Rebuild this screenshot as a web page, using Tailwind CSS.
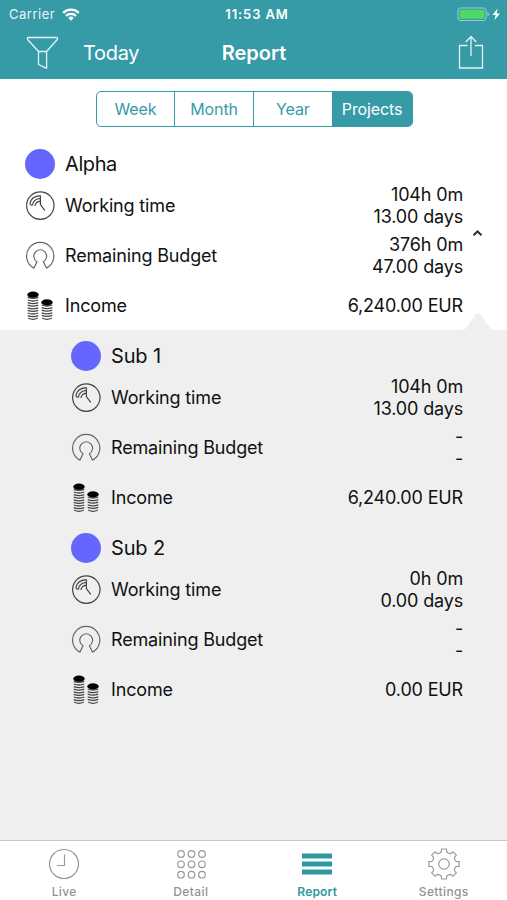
<!DOCTYPE html>
<html lang="en">
<head>
<meta charset="utf-8">
<title>Report</title>
<script src="https://cdn.jsdelivr.net/npm/@tailwindcss/browser@4"></script>
</head>
<body class="bg-white">
<svg class="hidden">
  <symbol id="time" viewBox="0 0 30 30">
    <g fill="none" stroke="#444" stroke-width="1.200">
      <circle cx="15.300" cy="14.600" r="13.700"/>
      <path d="M19.800 19.300L15.400 13.600V4.600M4.800 13.200C5.500 8 9.400 4.900 15.400 4.600M7.300 14.500C7.900 10.500 10.600 7.700 15.400 7.400M9.900 15C10.400 12.300 12 10.500 15.400 10.200M4.800 13.200L7.300 14.500"/>
    </g>
  </symbol>
  <symbol id="budget" viewBox="0 0 30 30">
    <path fill="none" stroke="#666" stroke-width="1.200" stroke-linejoin="round" d="M9 27.100A13.600 13.600 0 1 1 21.400 27.100L18.400 20.700A6.400 6.400 0 1 0 12 20.700Z"/>
  </symbol>
  <symbol id="coins" viewBox="0 0 30 30">
    <g fill="none" stroke="#444" stroke-width="1.300">
      <path d="M2.700 6.400q5.300 2 10.600 0M2.700 9q5.300 2 10.600 0M2.700 11.600q5.300 2 10.600 0M2.700 14.200q5.300 2 10.600 0M2.700 16.800q5.300 2 10.600 0M2.700 19.400q5.300 2 10.600 0M2.700 22q5.300 2 10.600 0M2.700 24.600q5.300 2 10.600 0M3.200 27q4.800 2.600 9.600 0"/>
      <path d="M16.700 14q5.300 2 10.600 0M16.700 16.600q5.300 2 10.600 0M16.700 19.200q5.300 2 10.600 0M16.700 21.800q5.300 2 10.600 0M16.700 24.400q5.300 2 10.600 0M17.200 27q4.800 2.600 9.600 0"/>
    </g>
    <ellipse cx="8" cy="3.700" rx="5.700" ry="3.100"/>
    <ellipse cx="22" cy="11.400" rx="5.700" ry="3.100"/>
  </symbol>
  <symbol id="tooth" viewBox="-16 -16 32 32" overflow="visible">
    <path d="M-4.600-11.100Q-3-10.800-2.700-12.300L-2.400-15H2.400L2.700-12.300Q3-10.800 4.600-11.100"/>
  </symbol>
</svg>
<div class="w-[507px] h-[900px] flex flex-col overflow-hidden font-['Inter',sans-serif] text-[#111]">
  <header class="h-[79px] shrink-0 bg-[#369ba7] text-white">
    <div class="h-[27px] grid grid-cols-3 items-center px-[9px] text-[13px] leading-[27px]">
      <div class="flex items-center gap-[7px] pt-px">
        <span class="tracking-[0.5px] text-white/90">Carrier</span>
        <svg class="w-[18px] h-[13px]" viewBox="0 0 18 13" fill="none" stroke="#fff" stroke-width="2.300"><path d="M1.200 4.800a11.200 11.200 0 0 1 15.600 0M4 7.900a7.200 7.200 0 0 1 10 0"/><path d="M6.300 9.900a3.900 3.900 0 0 1 5.400 0L9 12.800z" fill="#fff" stroke="none"/></svg>
      </div>
      <span class="text-center font-semibold pl-[7px] pt-px tracking-[0.9px] whitespace-nowrap">11:53 AM</span>
      <svg class="w-[44px] h-[15px] justify-self-end -mr-[3px]" viewBox="0 0 44 15"><rect x="1" y="1" width="28" height="12.500" rx="2.500" fill="none" stroke="#9bcdd3"/><rect x="2.700" y="2.700" width="24.600" height="9.100" rx="1" fill="#4cd964"/><path d="M30.500 5v4.500q1.500-.7 1.500-2.200T30.500 5z" fill="#9bcdd3"/><path d="M40.500 1.500L35.500 8h3.200l-1.300 5.200L43 6.500h-3.300z" fill="#fff"/></svg>
    </div>
    <div class="h-[52px] grid grid-cols-3 items-center pl-[26px] pr-[22px]">
      <div class="flex items-center gap-[24px]">
        <svg class="w-[33px] h-[34px]" viewBox="0 0 33 34" fill="none" stroke="#e3f4f5" stroke-width="1.300" stroke-linejoin="round"><path d="M2 1.500H31Q32.200 2.200 31 3.800L20.600 15.500V32.300L12.500 28.500V15.500L1.800 3.800Q.8 2.200 2 1.500zM12.500 15.500h8.100"/></svg>
        <span class="text-[20px] tracking-[-0.3px]">Today</span>
      </div>
      <span class="text-center text-[20px] font-semibold -ml-[3px]">Report</span>
      <svg class="w-[28px] h-[36px] justify-self-end" viewBox="0 0 28 36" fill="none" stroke="#e3f4f5" stroke-width="1.300"><path d="M10.500 10.500H2.500V33h23V10.500h-7.500M14 21V1.500M8.800 7l5.200-5.500L19.200 7"/></svg>
    </div>
  </header>
  <main class="flex-1 flex flex-col">
    <div class="h-[60px] pt-[12px] pl-px flex justify-center">
      <div class="h-[36px] w-[317px] grid grid-cols-4 border border-[#369ba7] rounded-[5px] overflow-hidden divide-x divide-[#369ba7] text-[16px] leading-[35px] text-center tracking-[-0.1px] text-[#369ba7]">
        <span>Week</span><span>Month</span><span>Year</span><span class="bg-[#369ba7] text-white">Projects</span>
      </div>
    </div>
    <section class="relative h-[191px] pl-[25px] pr-[44px] pt-[8px] text-[18px] leading-[22px] tracking-[-0.16px]">
      <div class="h-[34px] flex items-center gap-[10px]"><i class="size-[30px] rounded-full bg-[#6666ff]"></i><span class="text-[20px] tracking-[-0.4px]">Alpha</span></div>
      <div class="h-[50px] flex items-center gap-[10px]"><svg class="size-[30px]"><use href="#time"/></svg><span class="flex-1">Working time</span><span class="text-right">104h 0m<br>13.00 days</span></div>
      <div class="h-[50px] flex items-center gap-[10px]"><svg class="size-[30px]"><use href="#budget"/></svg><span class="flex-1">Remaining Budget</span><span class="text-right">376h 0m<br>47.00 days</span></div>
      <div class="h-[50px] flex items-center gap-[10px]"><svg class="size-[30px]"><use href="#coins"/></svg><span class="flex-1">Income</span><span class="text-right">6,240.00 EUR</span></div>
      <svg class="absolute left-[472px] top-[90px] w-[11px] h-[8px]" viewBox="0 0 11 8" fill="none" stroke="#26333d" stroke-width="2"><path d="M1.500 6.300L5.500 2.500L9.500 6.300"/></svg>
      <svg class="absolute left-[463px] bottom-0 w-[30px] h-[18px]" viewBox="0 0 30 18"><path d="M0 18Q2 17.500 3 16L13 2Q15 0 17 2L27 16Q28 17.500 30 18z" fill="#efefef"/></svg>
    </section>
    <div class="flex-1 bg-[#efefef] pt-px pl-[71px] pr-[44px] text-[18px] leading-[22px] tracking-[-0.16px]">
      <section class="h-[192px] pt-[8px]">
        <div class="h-[34px] flex items-center gap-[10px]"><i class="size-[30px] rounded-full bg-[#6666ff]"></i><span class="text-[20px]">Sub 1</span></div>
        <div class="h-[50px] flex items-center gap-[10px]"><svg class="size-[30px]"><use href="#time"/></svg><span class="flex-1">Working time</span><span class="text-right">104h 0m<br>13.00 days</span></div>
        <div class="h-[50px] flex items-center gap-[10px]"><svg class="size-[30px]"><use href="#budget"/></svg><span class="flex-1">Remaining Budget</span><span class="text-right">-<br>-</span></div>
        <div class="h-[50px] flex items-center gap-[10px]"><svg class="size-[30px]"><use href="#coins"/></svg><span class="flex-1">Income</span><span class="text-right">6,240.00 EUR</span></div>
      </section>
      <section class="h-[192px] pt-[8px]">
        <div class="h-[34px] flex items-center gap-[10px]"><i class="size-[30px] rounded-full bg-[#6666ff]"></i><span class="text-[20px]">Sub 2</span></div>
        <div class="h-[50px] flex items-center gap-[10px]"><svg class="size-[30px]"><use href="#time"/></svg><span class="flex-1">Working time</span><span class="text-right">0h 0m<br>0.00 days</span></div>
        <div class="h-[50px] flex items-center gap-[10px]"><svg class="size-[30px]"><use href="#budget"/></svg><span class="flex-1">Remaining Budget</span><span class="text-right">-<br>-</span></div>
        <div class="h-[50px] flex items-center gap-[10px]"><svg class="size-[30px]"><use href="#coins"/></svg><span class="flex-1">Income</span><span class="text-right">0.00 EUR</span></div>
      </section>
    </div>
  </main>
  <nav class="h-[60px] shrink-0 border-t border-[#c9c9c9] bg-white grid grid-cols-4 pl-px text-[12px] leading-[16px] font-medium tracking-[0.4px] text-[#929292]">
    <a class="flex flex-col items-center pt-[7px] gap-[4px]"><svg class="size-[32px]" viewBox="0 0 32 32" fill="none" stroke="#999" stroke-width="1.200"><circle cx="16" cy="16" r="14.500"/><path d="M16.500 6.500v11H9"/></svg>Live</a>
    <a class="flex flex-col items-center pt-[7px] gap-[4px]"><svg class="size-[32px]" viewBox="0 0 32 32" fill="none" stroke="#999" stroke-width="1.200"><circle cx="6" cy="6" r="3.300"/><circle cx="16.500" cy="6" r="3.300"/><circle cx="27" cy="6" r="3.300"/><circle cx="6" cy="16.300" r="3.300"/><circle cx="16.500" cy="16.300" r="3.300"/><circle cx="27" cy="16.300" r="3.300"/><circle cx="6" cy="26.700" r="3.300"/><circle cx="16.500" cy="26.700" r="3.300"/><circle cx="27" cy="26.700" r="3.300"/></svg>Detail</a>
    <a class="flex flex-col items-center pt-[7px] gap-[4px] text-[#2f97a0] font-semibold tracking-[0.2px]"><svg class="size-[32px]" viewBox="0 0 32 32" fill="#2f97a0"><path d="M1 5.500h30v5h-30zM1 13.500h30v5h-30zM1 21.500h30v5h-30z"/></svg>Report</a>
    <a class="flex flex-col items-center pt-[7px] gap-[4px]"><svg class="size-[32px]" viewBox="-16 -16 32 32" fill="none" stroke="#999" stroke-width="1.200"><circle r="5.200"/><use href="#tooth" x="-16" y="-16" width="32" height="32"/><use href="#tooth" x="-16" y="-16" width="32" height="32" transform="rotate(45)"/><use href="#tooth" x="-16" y="-16" width="32" height="32" transform="rotate(90)"/><use href="#tooth" x="-16" y="-16" width="32" height="32" transform="rotate(135)"/><use href="#tooth" x="-16" y="-16" width="32" height="32" transform="rotate(180)"/><use href="#tooth" x="-16" y="-16" width="32" height="32" transform="rotate(225)"/><use href="#tooth" x="-16" y="-16" width="32" height="32" transform="rotate(270)"/><use href="#tooth" x="-16" y="-16" width="32" height="32" transform="rotate(315)"/></svg>Settings</a>
  </nav>
</div>
</body>
</html>
